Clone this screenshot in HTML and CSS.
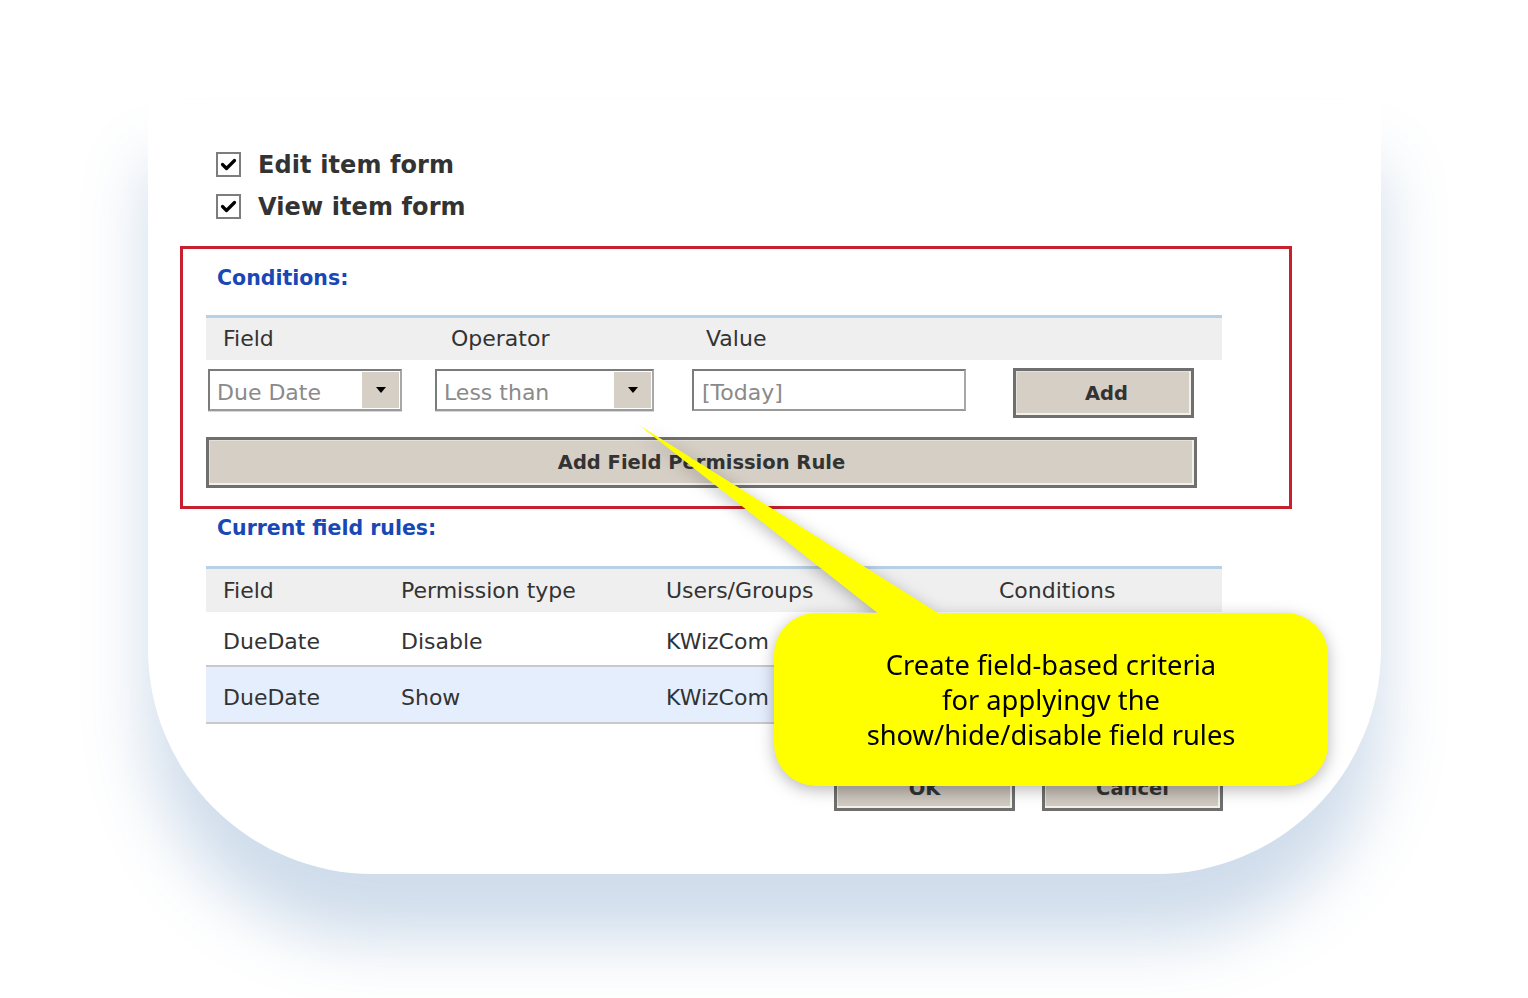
FILE: index.html
```html
<!DOCTYPE html>
<html>
<head>
<meta charset="utf-8">
<link rel="stylesheet" href="styles.css">
</head>
<body>
<div class="page">
  <div class="card">
    <div class="check-row">
      <svg class="cb" width="25" height="25" viewBox="0 0 25 25"><rect x="1" y="1" width="23" height="23" fill="#fff" stroke="#7d7d7d" stroke-width="2"/><path d="M6.5 12.5 L10.5 16.5 L18.5 8.5" fill="none" stroke="#000" stroke-width="3.2" stroke-linecap="round" stroke-linejoin="round"/></svg>
      <span class="check-label">Edit item form</span>
    </div>
    <div class="check-row">
      <svg class="cb" width="25" height="25" viewBox="0 0 25 25"><rect x="1" y="1" width="23" height="23" fill="#fff" stroke="#7d7d7d" stroke-width="2"/><path d="M6.5 12.5 L10.5 16.5 L18.5 8.5" fill="none" stroke="#000" stroke-width="3.2" stroke-linecap="round" stroke-linejoin="round"/></svg>
      <span class="check-label">View item form</span>
    </div>

    <div class="conditions">
      <div class="section-title">Conditions:</div>
      <div class="cond-head">
        <div class="hcell">Field</div>
        <div class="hcell">Operator</div>
        <div class="hcell">Value</div>
        <div></div>
      </div>
      <div class="cond-inputs">
        <div class="select sel1"><span class="sel-text">Due Date</span><span class="sel-btn"><span class="tri"></span></span></div>
        <div class="select sel2"><span class="sel-text">Less than</span><span class="sel-btn"><span class="tri"></span></span></div>
        <div class="textbox">[Today]</div>
        <div class="btn btn-add">Add</div>
      </div>
      <div class="btn btn-rule">Add Field Permission Rule</div>
    </div>

    <div class="section-title outside">Current field rules:</div>
    <table class="rules">
      <colgroup><col class="c1"><col class="c2"><col class="c3"><col class="c4"></colgroup>
      <thead>
        <tr><th>Field</th><th>Permission type</th><th>Users/Groups</th><th>Conditions</th></tr>
      </thead>
      <tbody>
        <tr class="r1"><td>DueDate</td><td>Disable</td><td>KWizCom</td><td></td></tr>
        <tr class="r2"><td>DueDate</td><td>Show</td><td>KWizCom</td><td></td></tr>
      </tbody>
    </table>

    <div class="actions">
      <div class="btn btn-act">OK</div>
      <div class="btn btn-act">Cancel</div>
    </div>
  </div>

  <div class="callout">
    <svg class="wedge" width="1528" height="998" viewBox="0 0 1528 998"><polygon points="639,425 946,618 884,618" fill="#ffff00"/></svg>
    <div class="bubble">
      <div class="bubble-text">Create field-based criteria<br>for applyingv the<br>show/hide/disable field rules</div>
    </div>
  </div>
</div>
</body>
</html>
```

FILE: styles.css
```css
html, body {
  margin: 0;
  padding: 0;
  background: #ffffff;
}
body {
  font-family: "DejaVu Sans", Verdana, sans-serif;
  color: #333333;
  width: 1528px;
  height: 998px;
  overflow: hidden;
}
.page {
  position: relative;
  width: 1528px;
  height: 998px;
  padding-top: 100px;
  box-sizing: border-box;
}
.card {
  margin-left: 148px;
  width: 1233px;
  box-sizing: border-box;
  padding: 43px 32px 63px 32px;
  background: #ffffff;
  border-radius: 0 0 225px 225px;
  box-shadow: 0 65px 65px rgba(95, 140, 190, 0.3);
}
.check-row {
  display: flex;
  align-items: center;
  height: 42px;
  margin-left: 36px;
  gap: 17px;
}
.cb { display: block; flex: none; }
.check-label {
  font-weight: bold;
  font-size: 24px;
  color: #333333;
  letter-spacing: 0.1px;
  position: relative;
  top: 1px;
}
.conditions {
  margin-top: 19px;
  width: 1112px;
  box-sizing: border-box;
  border: 3px solid #c7202f;
  padding: 17px 0 18px 23px;
}
.section-title {
  font-weight: bold;
  font-size: 20.5px;
  line-height: 24px;
  color: #1a47b6;
  margin-left: 11px;
  margin-bottom: 25px;
}
.section-title.outside {
  margin-top: 7px;
  margin-left: 37px;
  margin-bottom: 26px;
}
.cond-head, .cond-inputs {
  display: grid;
  grid-template-columns: 229px 257px 321px 1fr;
  width: 1016px;
}
.cond-head {
  background: #efefef;
  border-top: 3px solid #b9d1e7;
  height: 42px;
  align-items: center;
}
.hcell {
  font-size: 22px;
  padding-left: 16px;
  color: #333;
  position: relative;
  top: -1px;
}
.cond-head .hcell:first-child { padding-left: 17px; }
.cond-head .hcell:nth-child(3) { padding-left: 14px; }
.cond-inputs {
  margin-top: 9px;
  height: 50px;
  align-items: start;
}
.select {
  display: flex;
  align-items: stretch;
  height: 42px;
  box-sizing: border-box;
  border: 2px solid #7b7b7b;
  border-right-color: #a8a8a8;
  border-bottom-color: #9a9a9a;
  box-shadow: 0 1px 0 #d6d6d6;
  background: #fff;
  padding: 1px;
}
.sel1 { width: 194px; margin-left: 2px; }
.sel2 { width: 219px; }
.sel-text {
  flex: 1;
  font-size: 22px;
  color: #8a8a8a;
  padding-left: 6px;
  line-height: 42px;
}
.sel-btn {
  width: 37px;
  background: #d6cfc5;
  display: flex;
  align-items: center;
  justify-content: center;
}
.tri {
  width: 0;
  height: 0;
  border-left: 5px solid transparent;
  border-right: 5px solid transparent;
  border-top: 6px solid #000;
}
.textbox {
  width: 274px;
  height: 42px;
  box-sizing: border-box;
  border: 2px solid #7b7b7b;
  border-right-color: #a8a8a8;
  border-bottom-color: #9a9a9a;
  font-size: 22px;
  color: #8a8a8a;
  padding-left: 8px;
  line-height: 44px;
  background: #fff;
}
.btn {
  box-sizing: border-box;
  background: #d6cfc5;
  border: 3px solid #6f6f6f;
  box-shadow: inset -2px -2px 0 #f3f1ec, inset 1px 1px 0 #e4dfd7;
  font-weight: bold;
  font-size: 19.5px;
  color: #333;
  display: flex;
  align-items: center;
  justify-content: center;
}
.btn-add {
  width: 181px;
  height: 50px;
  margin-top: -1px;
  padding-left: 6px;
}
.btn-rule {
  margin-top: 18px;
  width: 991px;
  height: 51px;
}
.rules {
  margin-left: 26px;
  width: 1016px;
  border-collapse: collapse;
  table-layout: fixed;
  font-size: 22px;
  color: #333;
}
.rules col.c1 { width: 178px; }
.rules col.c2 { width: 265px; }
.rules col.c3 { width: 333px; }
.rules col.c4 { width: 240px; }
.rules thead tr {
  background: #efefef;
  border-top: 3px solid #b9d1e7;
}
.rules th {
  font-weight: normal;
  text-align: left;
  height: 44px;
  padding: 0 0 0 17px;
  box-sizing: border-box;
}
.rules td {
  padding: 7px 0 0 17px;
}
.rules tr.r1 td { height: 46px; }
.rules tr.r2 td { height: 48px; }
.rules tr.r1, .rules tr.r2 { border-bottom: 2px solid #c9c9cc; }
.rules tr.r2 { background: #e4eefc; }
.actions {
  margin-top: 37px;
  margin-left: 26px;
  width: 1017px;
  display: flex;
  justify-content: flex-end;
  gap: 27px;
}
.btn-act {
  width: 181px;
  height: 50px;
  padding-top: 6px;
  background: linear-gradient(#d6cfc5 0%, #c4beb5 55%, #d3cdc4 100%);
}
.callout {
  position: absolute;
  left: 0;
  top: 0;
  width: 1528px;
  height: 998px;
  pointer-events: none;
  filter: drop-shadow(0 4px 8px rgba(0, 0, 0, 0.28));
}
.wedge {
  position: absolute;
  left: 0;
  top: 0;
}
.bubble {
  position: absolute;
  left: 774px;
  top: 613px;
  width: 554px;
  height: 173px;
  background: #ffff00;
  border-radius: 42px;
  display: flex;
  align-items: center;
  justify-content: center;
}
.bubble-text {
  font-family: "Noto Sans", "Open Sans", sans-serif;
  font-size: 27.3px;
  line-height: 35px;
  color: #000;
  text-align: center;
}
```
